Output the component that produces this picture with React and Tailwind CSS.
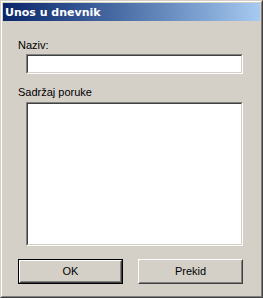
function Field({ className }) {
  return (
    <div className={`ml-2 w-[217px] ${className} border border-t-[#808080] border-l-[#808080] border-b-white border-r-white`}>
      <div className="h-full bg-white border border-t-[#404040] border-l-[#404040] border-b-[#d4d0c8] border-r-[#d4d0c8]" />
    </div>
  )
}

function Button({ label, isDefault }) {
  const face = (
    <div className="h-full flex items-center justify-center border border-transparent border-b-[#808080] border-r-[#808080] text-[11px] text-black">
      {label}
    </div>
  )
  if (isDefault) {
    return (
      <div className="w-[105px] h-[25px] border border-black">
        <div className="h-full border border-t-white border-l-white border-b-[#404040] border-r-[#404040]">
          {face}
        </div>
      </div>
    )
  }
  return (
    <div className="w-[105px] h-[25px] border border-t-white border-l-white border-b-[#404040] border-r-[#404040]">
      {face}
    </div>
  )
}

export default function App() {
  return (
    <div
      className="w-[263px] h-[298px] bg-[#d4d0c8] border border-t-[#d4d0c8] border-l-[#d4d0c8] border-b-[#404040] border-r-[#404040]"
      style={{ fontFamily: '"Liberation Sans", Arial, sans-serif' }}
    >
      <div className="h-full flex flex-col p-px border border-t-white border-l-white border-b-[#808080] border-r-[#808080]">
        <div className="h-[18px] flex items-center pl-[2px] bg-gradient-to-r from-[#0a246a] to-[#a6caf0]">
          <span className="text-[11px] font-bold text-white leading-none font-['DejaVu_Sans',sans-serif]">
            Unos u dnevnik
          </span>
        </div>

        <div className="flex-1 flex flex-col pl-[15px] pt-[18px]">
          <p className="text-[11px] leading-[13px] text-black">Naziv:</p>
          <Field className="mt-[2px] h-[20px]" />
          <p className="mt-[12px] text-[11px] leading-[13px] text-black">Sadržaj poruke</p>
          <Field className="mt-[3px] h-[144px]" />
          <div className="mt-[13px] flex gap-[15px]">
            <Button label="OK" isDefault />
            <Button label="Prekid" />
          </div>
        </div>
      </div>
    </div>
  )
}
